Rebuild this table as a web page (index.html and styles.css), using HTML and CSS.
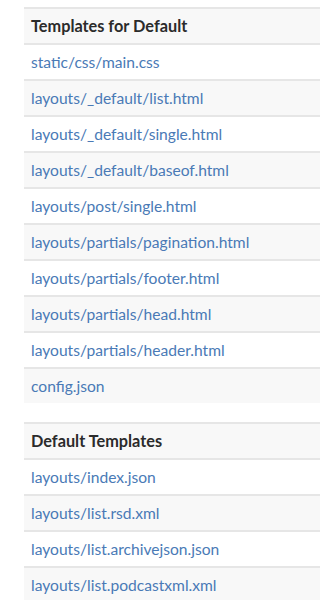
FILE: index.html
```html
<!DOCTYPE html>
<html>
<head>
<meta charset="utf-8">
<link rel="stylesheet" href="styles.css">
</head>
<body>
<div class="page">
  <table class="tpl">
    <thead><tr><th>Templates for Default</th></tr></thead>
    <tbody>
      <tr><td><a href="#">static/css/main.css</a></td></tr>
      <tr><td><a href="#">layouts/_default/list.html</a></td></tr>
      <tr><td><a href="#">layouts/_default/single.html</a></td></tr>
      <tr><td><a href="#">layouts/_default/baseof.html</a></td></tr>
      <tr><td><a href="#">layouts/post/single.html</a></td></tr>
      <tr><td><a href="#">layouts/partials/pagination.html</a></td></tr>
      <tr><td><a href="#">layouts/partials/footer.html</a></td></tr>
      <tr><td><a href="#">layouts/partials/head.html</a></td></tr>
      <tr><td><a href="#">layouts/partials/header.html</a></td></tr>
      <tr><td><a href="#">config.json</a></td></tr>
    </tbody>
  </table>
  <table class="tpl">
    <thead><tr><th>Default Templates</th></tr></thead>
    <tbody>
      <tr><td><a href="#">layouts/index.json</a></td></tr>
      <tr><td><a href="#">layouts/list.rsd.xml</a></td></tr>
      <tr><td><a href="#">layouts/list.archivejson.json</a></td></tr>
      <tr><td><a href="#">layouts/list.podcastxml.xml</a></td></tr>
    </tbody>
  </table>
</div>
</body>
</html>
```

FILE: styles.css
```css
html, body {
  margin: 0;
  padding: 0;
  background: #ffffff;
}
body {
  font-family: Lato, "Open Sans", sans-serif;
  font-size: 15.6px;
  overflow: hidden;
}
.page {
  padding: 7px 0 0 24px;
  display: flex;
  flex-direction: column;
  gap: 19px;
}
.tpl {
  width: 100%;
  border-collapse: collapse;
}
.tpl th,
.tpl td {
  border-top: 2px solid #e6e6e6;
  height: 34px;
  padding: 0 0 0 7px;
  text-align: left;
  box-sizing: content-box;
  line-height: 20px;
}
.tpl th {
  background: #f8f8f8;
  color: #2b2b2b;
  font-weight: 700;
  font-size: 16.3px;
}
.tpl tbody tr:nth-child(even) td {
  background: #f8f8f8;
}
.tpl a {
  color: #4a7ab6;
  text-decoration: none;
}
```
